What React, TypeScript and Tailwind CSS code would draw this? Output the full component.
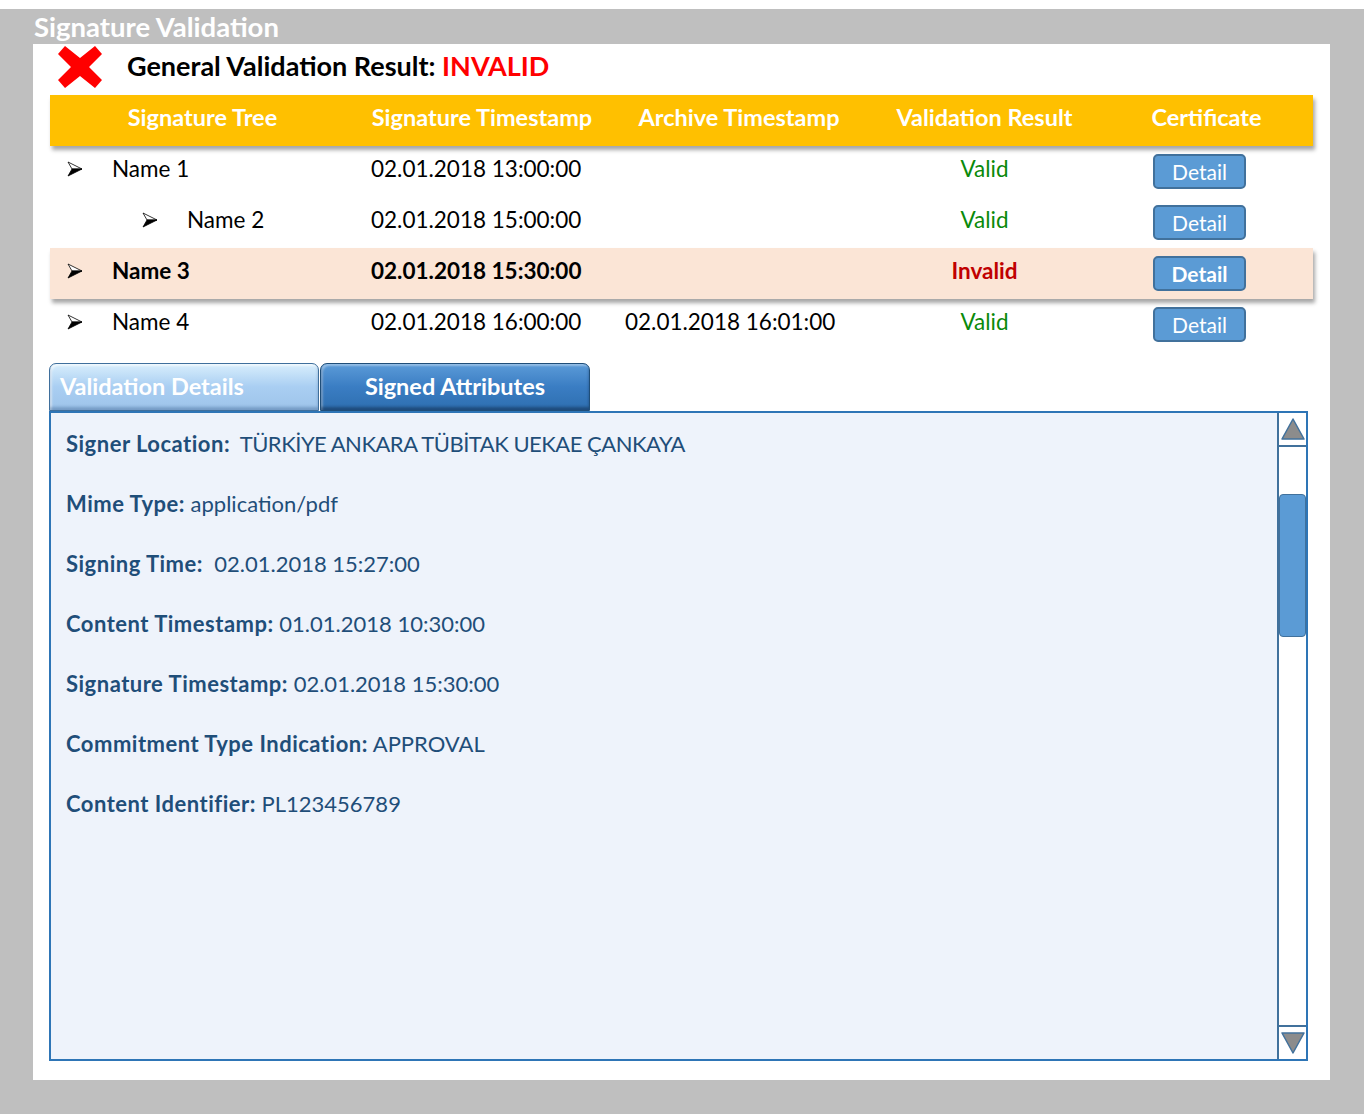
import React from 'react';

const FONT = "font-['Lato','Open_Sans',sans-serif]";

type Row = { name: string; level: number; ts: string; archive?: string; ok: boolean; active?: boolean };

const ROWS: Row[] = [
  { name: 'Name 1', level: 0, ts: '02.01.2018 13:00:00', ok: true },
  { name: 'Name 2', level: 1, ts: '02.01.2018 15:00:00', ok: true },
  { name: 'Name 3', level: 0, ts: '02.01.2018 15:30:00', ok: false, active: true },
  { name: 'Name 4', level: 0, ts: '02.01.2018 16:00:00', archive: '02.01.2018 16:01:00', ok: true },
];

// label, value, tighter spacing for long upper-case values
const ATTRS: [string, string, boolean?][] = [
  ['Signer Location:', '\u00a0TÜRKİYE ANKARA TÜBİTAK UEKAE ÇANKAYA', true],
  ['Mime Type:', 'application/pdf'],
  ['Signing Time:', '\u00a002.01.2018 15:27:00'],
  ['Content Timestamp:', '01.01.2018 10:30:00'],
  ['Signature Timestamp:', '02.01.2018 15:30:00'],
  ['Commitment Type Indication:', 'APPROVAL'],
  ['Content Identifier:', 'PL123456789'],
];

function RedCross() {
  return (
    <svg width="46" height="44" viewBox="0 0 46 44">
      <path d="M8 1 L23 13 L38 1 L45 9 L32 22 L45 35 L38 43 L23 31 L8 43 L1 35 L14 22 L1 9 Z" fill="#ff0000" />
    </svg>
  );
}

// wingdings-style bullet arrow
function Arrow() {
  return (
    <svg width="16" height="16" viewBox="0 0 16 16">
      <path d="M1 1 L15 8 L5 8 Z" fill="#fff" stroke="#000" strokeWidth="0.8" strokeLinejoin="round" />
      <path d="M5 8 L15 8 L1 15 Z" fill="#000" stroke="#000" strokeWidth="0.8" strokeLinejoin="round" />
    </svg>
  );
}

function Tri({ down }: { down?: boolean }) {
  return (
    <svg width="26" height="26" viewBox="0 0 26 26">
      <path d={down ? 'M2 3 L24 3 L13 23 Z' : 'M13 3 L24 23 L2 23 Z'} fill="#8c8c8c" stroke="#41719c" strokeWidth="1.5" strokeLinejoin="round" />
    </svg>
  );
}

export default function App() {
  return (
    <div className={`w-[1364px] h-[1115px] bg-white pt-[9px] ${FONT}`}>
      <div className="h-[1105px] bg-[#bfbfbf] flex flex-col">
        <div className="h-[35px] pl-[34px] flex items-center text-white font-bold text-[27.5px]">Signature Validation</div>

        <div className="ml-[33px] w-[1297px] h-[1036px] bg-white px-[17px] flex flex-col">
          <div className="h-[51px] flex items-center pl-[7px] pb-[5px] gap-[24px]">
            <RedCross />
            <span className="text-[27px] font-bold text-black -mt-[2px]">
              General Validation Result: <span className="text-[#ff0000]">INVALID</span>
            </span>
          </div>

          <div className="h-[51px] pb-[6px] bg-[#ffc000] grid grid-cols-[305px_254px_260px_231px_213px] items-center text-white font-bold text-[23.5px] shadow-[2px_4px_4px_rgba(0,0,0,0.35)] relative z-10">
            <span className="text-center">Signature Tree</span>
            <span className="text-center">Signature Timestamp</span>
            <span className="text-center">Archive Timestamp</span>
            <span className="text-center">Validation Result</span>
            <span className="text-center">Certificate</span>
          </div>

          <div className="flex flex-col">
            {ROWS.map((r) => (
              <div key={r.name}
                className={`h-[51px] grid grid-cols-[305px_254px_260px_231px_213px] items-center text-[22.5px] text-black ${r.active ? 'bg-[#fbe5d6] font-bold shadow-[2px_4px_4px_rgba(0,0,0,0.35)] relative' : ''}`}>
                <div className={`flex items-center pb-[5px] ${r.level ? 'pl-[92px]' : 'pl-[17px]'}`}>
                  <Arrow />
                  <span className="ml-[29px]">{r.name}</span>
                </div>
                <span className="pl-[16px] pb-[5px]">{r.ts}</span>
                <span className="pl-[16px] pb-[5px]">{r.archive ?? ''}</span>
                <span className={`text-center pb-[5px] ${r.ok ? 'text-[#0a8a0a]' : 'text-[#c00000] font-bold'}`}>{r.ok ? 'Valid' : 'Invalid'}</span>
                <div className="pl-[53px]">
                  <button className="w-[93px] h-[35px] rounded-[5px] bg-[#5b9bd5] border-2 border-[#41719c] text-white text-[21px] leading-none">Detail</button>
                </div>
              </div>
            ))}
          </div>

          <div className="mt-[13px] flex -ml-px">
            <div className="w-[270px] h-[48px] rounded-t-[7px] border border-[#3f6f9c] bg-gradient-to-b from-[#d8eefc] via-[#a9cef2] to-[#9ec4ea] shadow-[inset_0_-3px_3px_rgba(40,80,130,0.35),inset_2px_2px_2px_rgba(255,255,255,0.6)] flex items-center pl-[10px] text-white font-bold text-[23.5px]">
              Validation Details
            </div>
            <div className="ml-px w-[270px] h-[48px] rounded-t-[7px] border border-[#1f4e79] bg-gradient-to-b from-[#5b9bd8] via-[#3a7dc3] to-[#2e6fb0] shadow-[inset_0_-3px_3px_rgba(10,30,60,0.45),inset_2px_2px_2px_rgba(255,255,255,0.35)] flex items-center justify-center text-white font-bold text-[23.5px]">
              Signed Attributes
            </div>
          </div>

          <div className="-ml-px w-[1259px] h-[650px] border-2 border-[#2e75b6] bg-[#eef3fb] flex">
            <div className="flex-1 pl-[15px] flex flex-col text-[22px] text-[#1f4e79]">
              {ATTRS.map(([k, v, tight]) => (
                <div key={k} className="h-[60px] flex items-center">
                  <span className="font-bold tracking-[0.5px]">{k}</span>
                  <span className={`whitespace-pre ${tight ? 'tracking-[-0.5px]' : ''}`}>{' '}{v}</span>
                </div>
              ))}
            </div>
            <div className="w-[29px] border-l-2 border-[#41719c] bg-white flex flex-col">
              <div className="h-[34px] border-b-2 border-[#41719c] flex items-center justify-center"><Tri /></div>
              <div className="flex-1 pt-[47px]">
                <div className="h-[143px] rounded-[4px] bg-[#5b9bd5] border border-[#41719c]" />
              </div>
              <div className="h-[34px] border-t-2 border-[#41719c] flex items-center justify-center"><Tri down /></div>
            </div>
          </div>
        </div>
      </div>
    </div>
  );
}
